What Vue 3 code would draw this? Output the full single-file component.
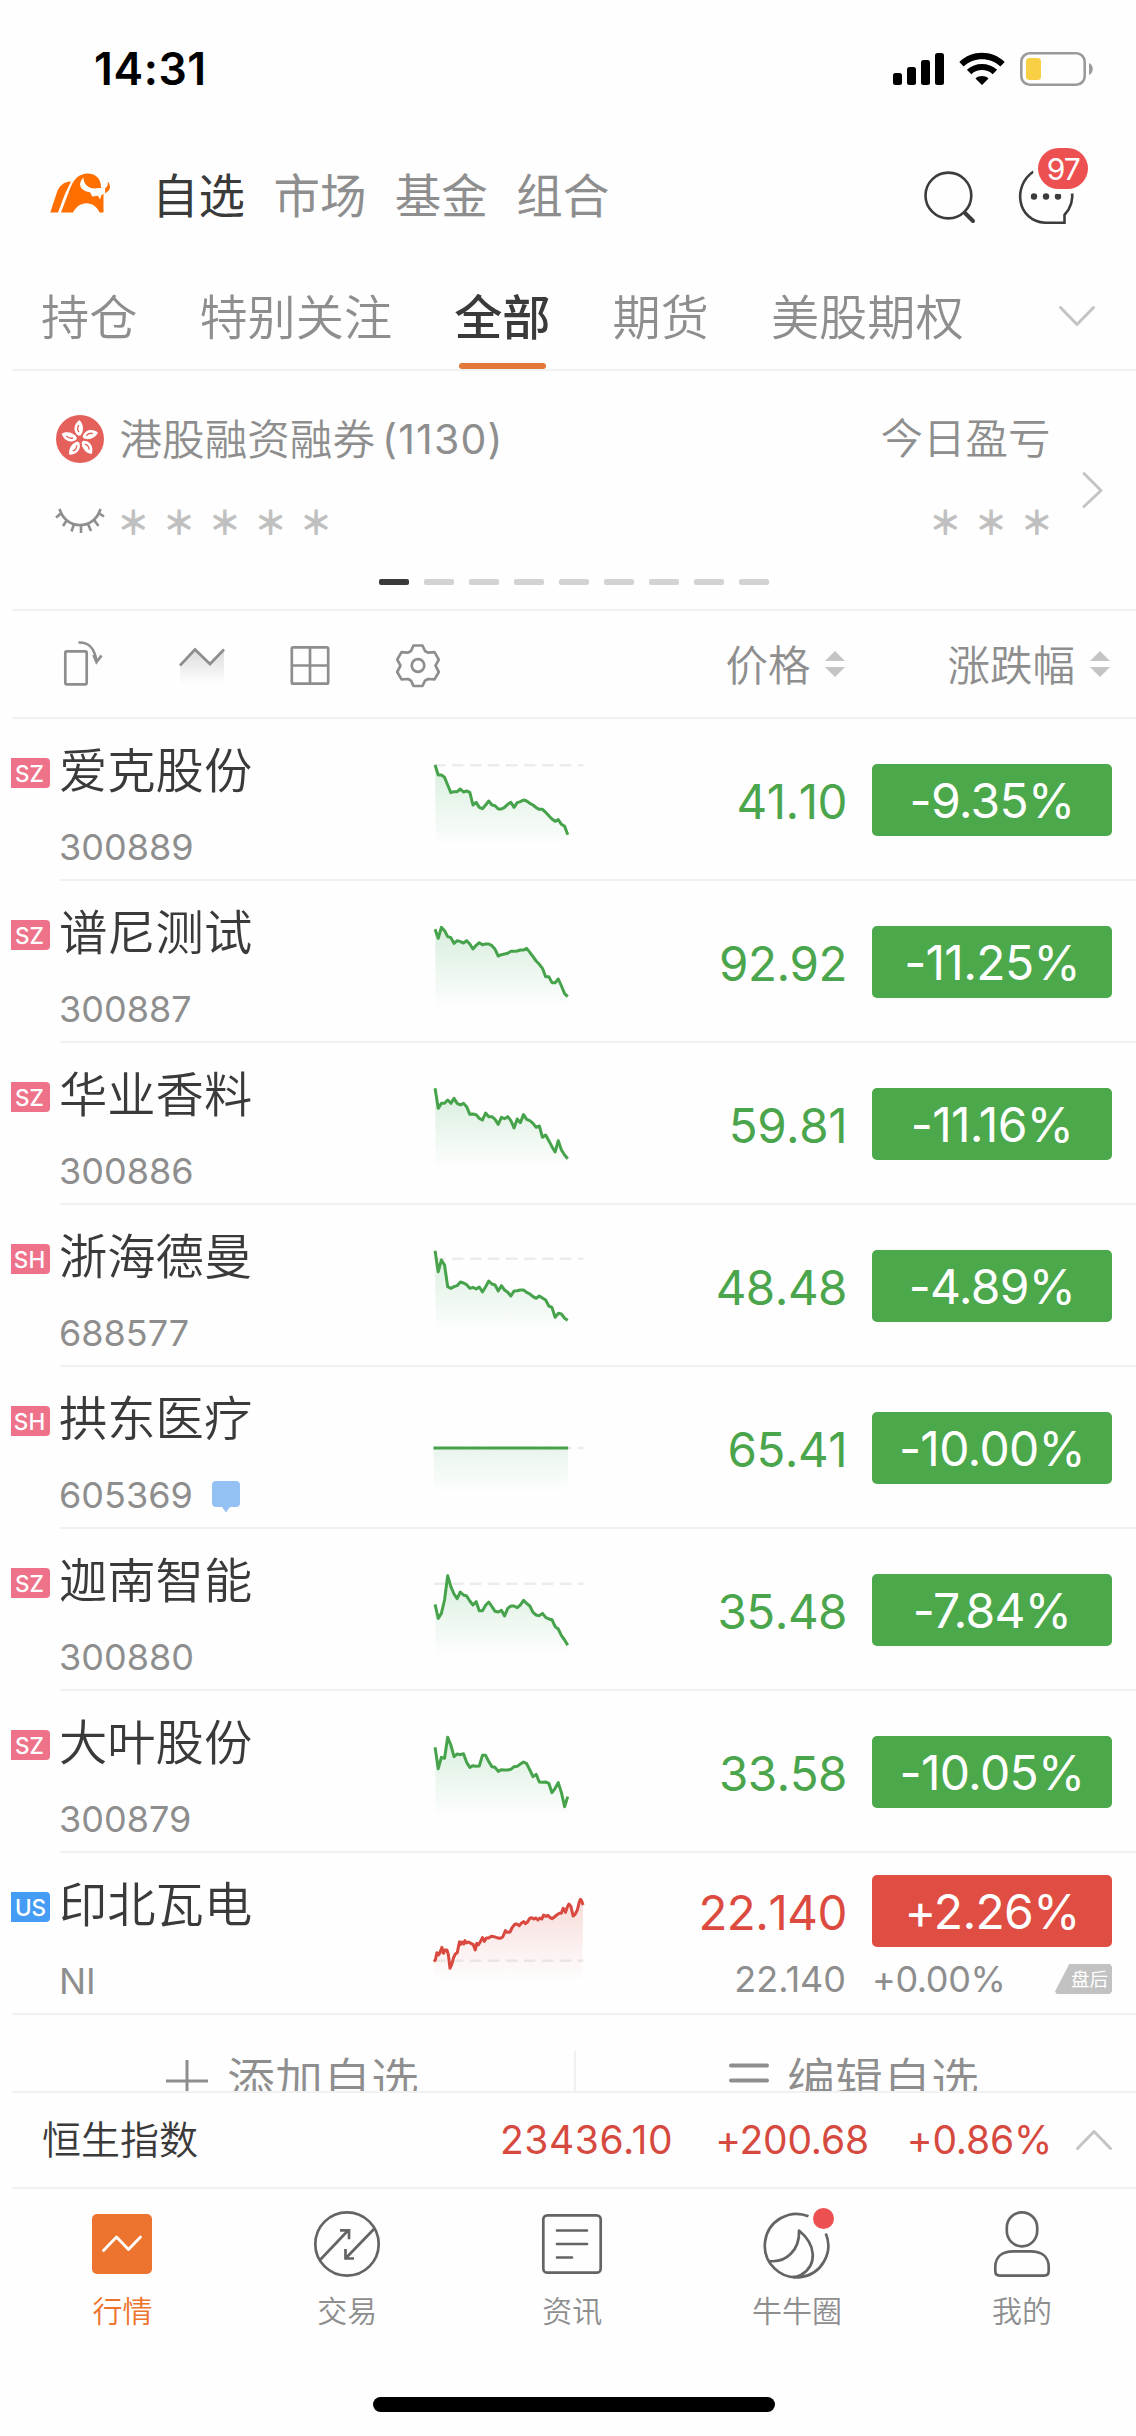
<script setup>
const STEP = 8.26

const series = (values) => values.map((y, i) => [8 + i * STEP, y])
const toPoints = (pts) => pts.map(([x, y]) => `${x.toFixed(1)},${y}`).join(' ')
const toArea = (pts) =>
  `${pts[0][0] + 2},${380} ${toPoints(pts)} ${(pts[pts.length - 1][0] - 2).toFixed(1)},380`

const topNav = ['自选', '市场', '基金', '组合']
const groups = ['持仓', '特别关注', '全部', '期货', '美股期权']

const stocks = [
  {
    market: 'SZ', name: '爱克股份', code: '300889', price: '41.10', change: '-9.35%', base: 139,
    pts: series([138, 168, 168, 175, 198, 221, 218, 218, 210, 219, 216, 220, 258, 250, 265, 269, 258, 246, 258, 260, 270, 270, 265, 256, 250, 265, 251, 248, 243, 246, 253, 258, 266, 271, 271, 280, 290, 300, 307, 302, 316, 322, 347]),
  },
  {
    market: 'SZ', name: '谱尼测试', code: '300887', price: '92.92', change: '-11.25%',
    pts: series([145, 172, 139, 149, 167, 170, 187, 179, 182, 186, 179, 189, 204, 193, 185, 191, 189, 189, 194, 205, 225, 221, 219, 217, 211, 211, 210, 207, 207, 202, 214, 227, 240, 250, 262, 287, 287, 305, 305, 294, 315, 338, 347]),
  },
  {
    market: 'SZ', name: '华业香料', code: '300886', price: '59.81', change: '-11.16%',
    pts: series([136, 196, 181, 181, 171, 181, 166, 181, 186, 181, 191, 214, 213, 215, 226, 231, 210, 221, 221, 229, 244, 223, 227, 221, 233, 255, 228, 239, 215, 229, 233, 241, 253, 249, 283, 276, 293, 311, 327, 293, 321, 336, 347]),
  },
  {
    market: 'SH', name: '浙海德曼', code: '688577', price: '48.48', change: '-4.89%', base: 161,
    pts: series([137, 200, 165, 180, 245, 250, 245, 242, 231, 234, 239, 250, 247, 252, 246, 261, 245, 228, 237, 240, 258, 242, 255, 262, 273, 258, 257, 255, 255, 262, 267, 275, 280, 273, 279, 285, 303, 307, 337, 325, 327, 340, 346]),
  },
  {
    market: 'SH', name: '拱东医疗', code: '605369', price: '65.41', change: '-10.00%', base: 243, note: true,
    pts: [[4, 243], [356, 243]],
  },
  {
    market: 'SZ', name: '迦南智能', code: '300880', price: '35.48', change: '-7.84%', base: 164,
    pts: series([226, 268, 253, 213, 140, 173, 195, 209, 189, 198, 201, 216, 228, 218, 245, 245, 229, 219, 233, 247, 249, 244, 261, 238, 231, 231, 236, 228, 214, 223, 231, 250, 258, 260, 253, 265, 270, 272, 293, 300, 320, 333, 349]),
  },
  {
    market: 'SZ', name: '大叶股份', code: '300879', price: '33.58', change: '-10.05%',
    pts: series([169, 233, 199, 202, 139, 162, 197, 189, 191, 188, 214, 229, 224, 226, 225, 193, 193, 212, 227, 229, 241, 236, 237, 237, 235, 227, 226, 219, 213, 218, 237, 257, 250, 273, 274, 273, 277, 305, 292, 275, 305, 347, 317]),
  },
  {
    market: 'US', name: '印北瓦电', code: 'NI', price: '22.140', change: '+2.26%', base: 323, up: true,
    after: { price: '22.140', change: '+0.00%' },
    pts: [
      [5, 326], [9, 320], [13, 299], [17, 306], [20, 301], [26, 283], [30, 301], [34, 291], [39, 291], [43, 306], [47, 346],
      [52, 333], [56, 315], [61, 303], [66, 299], [72, 266], [75, 274], [79, 267], [83, 273], [86, 263], [90, 270], [95, 267], [103, 272],
      [108, 275], [113, 291], [117, 271], [121, 276], [126, 267], [132, 254], [137, 265], [142, 255], [148, 255], [155, 250], [162, 251], [170, 254],
      [178, 256], [185, 252], [192, 233], [197, 238], [204, 237], [209, 225], [216, 214], [222, 213], [228, 218], [234, 210], [240, 206],
      [244, 212], [249, 208], [255, 197], [260, 194], [266, 198], [272, 195], [277, 201], [282, 195], [287, 198], [292, 186], [298, 190], [303, 187], [309, 194],
      [314, 197], [320, 192], [326, 186], [333, 181], [338, 181], [343, 166], [349, 178], [354, 161], [358, 153], [363, 160], [369, 189], [374, 184], [380, 171], [385, 147], [388, 139], [391, 143], [395, 156],
    ],
  },
]
</script>

<template>
  <div class="app">
    <div class="status">
      <span class="time">14:31</span>
      <svg class="status-icons" width="204" height="36" viewBox="0 0 204 36">
        <rect x="1" y="22" width="9" height="12" rx="2.5" />
        <rect x="15" y="16" width="9" height="18" rx="2.5" />
        <rect x="29" y="9" width="9" height="25" rx="2.5" />
        <rect x="43" y="2" width="9" height="32" rx="2.5" />
        <path d="M90 34l-6.500-6.600c3.600-3.200 9.400-3.200 13 0zM74.900 18.800c8.400-7.900 21.800-7.900 30.200 0l-4.400 4.500c-6-5.600-15.400-5.600-21.400 0zM67.300 11c12.700-12.200 32.700-12.200 45.400 0l-4.400 4.500c-10.300-9.700-26.300-9.700-36.600 0z" />
        <rect x="129.300" y="2.300" width="63.400" height="31.400" rx="8.500" fill="none" stroke="#9a9a9a" stroke-width="2.600" />
        <rect x="134" y="7" width="15" height="22" rx="3.500" fill="#f8cf45" />
        <path d="M197 12c5 2 5 10 0 12z" fill="#9a9a9a" />
      </svg>
    </div>

    <header class="header">
      <svg class="logo" width="62" height="40" viewBox="0 0 62 40">
        <g fill="#ff6f00">
          <path d="M.3 38.500L6.500 19.500C9 12 13 8 21 7.500L15 20 8 38.500z" />
          <path d="M11 38.500L19.500 16C23 6 28-.5 38.500-.5 47 0 51 6 51 13l2.500 6v19.500h-4C47.500 34 44 30 37 29.300 30 29.500 26 33 23 38.500z" />
          <path d="M57.800 7.500c4 5 2.500 9.500-3.500 12l-1-4.500c3.500-1 5-3.500 4.500-7.500z" />
        </g>
        <path d="M33.500 3.500C27 10 30 17 40 18.300l2.300 4.200 5.700-.8 2 3.800 1.500-4.500 3.500-2 .3-4.500c-3-.7-5.800-.7-8.300-.2C39 15 33.500 11 33.500 3.500z" fill="#fefefe" />
      </svg>
      <nav class="top-nav">
        <span v-for="(t, i) in topNav" :key="t" :class="{ on: i === 0 }">{{ t }}</span>
      </nav>
      <svg class="search" width="56" height="56" viewBox="0 0 56 56" fill="none" stroke="#3c3c3c">
        <circle cx="26.400" cy="27.500" r="22.900" stroke-width="2.600" />
        <path d="M43 45l8 8" stroke-width="4" stroke-linecap="round" />
      </svg>
      <div class="chat">
        <svg width="60" height="60" viewBox="0 0 60 60" fill="none" stroke="#3c3c3c" stroke-width="2.600">
          <path d="M17.500 4.500C-4 19 1 54 29 55.800H48.500V48c6-6.500 9-14 7.500-24.500" />
          <g fill="#3c3c3c" stroke="none">
            <circle cx="18" cy="29.500" r="3.200" />
            <circle cx="30" cy="29.500" r="3.200" />
            <circle cx="42" cy="29.500" r="3.200" />
          </g>
        </svg>
        <span class="count">97</span>
      </div>
    </header>

    <div class="groups">
      <div v-for="g in groups" :key="g" class="group" :class="{ on: g === '全部' }">
        <span>{{ g }}</span>
        <i />
      </div>
      <svg class="chev" width="40" height="24" viewBox="0 0 40 24" fill="none" stroke="#c4c4c4" stroke-width="3" stroke-linecap="round" stroke-linejoin="round">
        <path d="M3.500 3.500L20 20.500 36.500 3.500" />
      </svg>
    </div>

    <section class="account">
      <div class="account-body">
        <div class="acc-left">
          <div class="acc-title">
            <svg width="48" height="48" viewBox="-24 -24 48 48">
              <circle r="24" fill="#e4605b" />
              <g v-for="n in 5" :key="n" :transform="`rotate(${n * 72 - 8})`">
                <path d="M-1-3.500C-6-8-5-15 2-19c4 5 3 12-1 15.500z" fill="#fff" />
                <path d="M0-7c-1.500-2.500-1-5 .8-7" fill="none" stroke="#e4605b" stroke-width="1.300" />
              </g>
            </svg>
            <span>港股融资融券</span><b>(1130)</b>
          </div>
          <div class="masked">
            <svg width="50" height="26" viewBox="0 0 50 26" fill="none" stroke="#8e8e8e" stroke-width="2.600">
              <path d="M4.500 1C11 22.500 39 22.500 45.500 1M6.500 5L1 9.500M12 12l-4 6M19 16l-2.500 7.500M26 17v8M33 16l3 7M39.500 12.500l4 5.500M43.500 5l5.500 3.500" />
            </svg>
            <span v-for="n in 5" :key="n" class="star">＊</span>
          </div>
        </div>
        <div class="acc-right">
          <span class="pl">今日盈亏</span>
          <div class="masked">
            <span v-for="n in 3" :key="n" class="star">＊</span>
          </div>
        </div>
        <svg class="acc-go" width="24" height="40" viewBox="0 0 24 40" fill="none" stroke="#c4c4c4" stroke-width="3" stroke-linecap="round" stroke-linejoin="round">
          <path d="M3 3.500L20 20.500 3 36.500" />
        </svg>
      </div>
      <div class="pager"><i v-for="n in 9" :key="n" :class="{ on: n === 1 }" /></div>
    </section>

    <div class="toolbar">
      <svg class="tools" width="390" height="50" viewBox="0 0 390 50" fill="none" stroke="#8e8e8e" stroke-width="2.700">
        <defs>
          <linearGradient id="tool-fade" x1="0" y1="0" x2="0" y2="1">
            <stop offset="0" stop-color="#dcdcdc" />
            <stop offset="1" stop-color="#dcdcdc" stop-opacity="0" />
          </linearGradient>
        </defs>
        <rect x="5.300" y="16.300" width="21.400" height="33" rx="1.500" />
        <path d="M18.500 7.500c11-.5 16 6 18 18.500M33.500 20l3 7 5-6.500" />
        <path d="M120 30l15-16 15 15 14-14v34h-44z" fill="url(#tool-fade)" stroke="none" />
        <path d="M120 30.500l15-16L150 29l14-14.500" />
        <rect x="231.800" y="12.300" width="36.400" height="36.400" rx="1.500" />
        <path d="M250 12v37M231 30.500h37" />
        <circle cx="358" cy="30.500" r="6.300" />
        <path d="M353.500 10.500h9l2.500 5.500 3 1.700 6.500-.5 4.300 7.500-3.300 6 3.300 6.300-4.300 7.400-6.500-.4-3 1.700-2.500 5.300h-9l-2.500-5.300-3-1.700-6.500.4-4.300-7.400 3.300-6.300-3.300-6 4.300-7.500 6.500.5 3-1.700z" stroke-linejoin="round" />
      </svg>
      <div class="sort price-sort">
        <span>价格</span>
        <svg width="20" height="28" viewBox="0 0 20 28" fill="#c4c4c4"><path d="M0 11L10 1l10 10zM0 17h20L10 27z" /></svg>
      </div>
      <div class="sort">
        <span>涨跌幅</span>
        <svg width="20" height="28" viewBox="0 0 20 28" fill="#c4c4c4"><path d="M0 11L10 1l10 10zM0 17h20L10 27z" /></svg>
      </div>
    </div>

    <main>
      <svg class="defs" width="0" height="0">
        <linearGradient id="fade-down" gradientUnits="userSpaceOnUse" x1="0" y1="140" x2="0" y2="380">
          <stop offset="0" stop-color="#3fae5c" stop-opacity=".2" />
          <stop offset="1" stop-color="#3fae5c" stop-opacity="0" />
        </linearGradient>
        <linearGradient id="fade-up" gradientUnits="userSpaceOnUse" x1="0" y1="140" x2="0" y2="385">
          <stop offset="0" stop-color="#dc5048" stop-opacity=".2" />
          <stop offset="1" stop-color="#dc5048" stop-opacity="0" />
        </linearGradient>
      </svg>
      <div v-for="s in stocks" :key="s.code" class="row" :class="{ up: s.up }">
        <span class="market" :class="{ us: s.market === 'US' }">{{ s.market }}</span>
        <div class="cells">
          <div class="ident">
            <span class="name">{{ s.name }}</span>
            <span class="code">
              {{ s.code }}
              <svg v-if="s.note" width="28" height="32" viewBox="0 0 28 32" fill="#94c1f3">
                <path d="M4 0h20a4 4 0 0 1 4 4v18a4 4 0 0 1-4 4h-6l-4 5.500-4-5.500H4a4 4 0 0 1-4-4V4a4 4 0 0 1 4-4z" />
              </svg>
            </span>
          </div>
          <svg class="chart" width="153" height="160" viewBox="0 0 400 480" preserveAspectRatio="none" fill="none">
            <path v-if="s.base" :d="`M5 ${s.base}H396`" stroke="#ececec" stroke-width="2.500" stroke-dasharray="11.500 6.500" vector-effect="non-scaling-stroke" />
            <polygon :points="toArea(s.pts)" :fill="s.up ? 'url(#fade-up)' : 'url(#fade-down)'" />
            <polyline :points="toPoints(s.pts)" :stroke="s.up ? '#d9493f' : '#46a34b'" stroke-width="3" stroke-linejoin="round" vector-effect="non-scaling-stroke" />
          </svg>
          <div class="quote">
            <span class="price">{{ s.price }}</span>
            <span v-if="s.after" class="after-price">{{ s.after.price }}</span>
          </div>
          <div class="move">
            <span class="change">{{ s.change }}</span>
            <div v-if="s.after" class="after">
              <span>{{ s.after.change }}</span>
              <span class="after-tag">盘后</span>
            </div>
          </div>
        </div>
      </div>
    </main>

    <div class="actions">
      <div class="action add">
        <svg width="44" height="44" viewBox="0 0 44 44" stroke="#8e8e8e" stroke-width="3"><path d="M1 22h42M22 1v42" /></svg>
        <span>添加自选</span>
      </div>
      <div class="action edit">
        <svg width="40" height="44" viewBox="0 0 40 44" stroke="#8e8e8e" stroke-width="4" stroke-linecap="round"><path d="M2 6.500h36M2 21.500h36M2 36.500h36" /></svg>
        <span>编辑自选</span>
      </div>
    </div>

    <div class="index">
      <span class="index-name">恒生指数</span>
      <span class="v1">23436.10</span>
      <span class="v2">+200.68</span>
      <span class="v3">+0.86%</span>
      <svg width="38" height="24" viewBox="0 0 38 24" fill="none" stroke="#c4c4c4" stroke-width="3" stroke-linecap="round" stroke-linejoin="round">
        <path d="M2.500 20.500L19 3.500l16.500 17" />
      </svg>
    </div>

    <footer class="tabbar">
      <div class="tab on">
        <svg width="68" height="68" viewBox="0 0 68 68">
          <rect x="4" y="4" width="60" height="60" rx="5" fill="#ed742e" />
          <path d="M15.500 40.500l13-13.500 12 12.500 12-12.500" fill="none" stroke="#fff" stroke-width="2.800" stroke-linecap="round" stroke-linejoin="round" />
        </svg>
        <span>行情</span>
      </div>
      <div class="tab">
        <svg width="68" height="68" viewBox="0 0 68 68" fill="none" stroke="#646464" stroke-width="2.700">
          <circle cx="34" cy="34" r="31.700" />
          <path d="M7 50l28.500-30M27 20.300h9v9M61 19L33 48M32.500 39v9.500H41" />
        </svg>
        <span>交易</span>
      </div>
      <div class="tab">
        <svg width="68" height="68" viewBox="0 0 68 68" fill="none" stroke="#646464" stroke-width="2.700">
          <rect x="5.300" y="5.300" width="57.400" height="57.400" rx="4" />
          <path d="M19 20.500h30M19 34h30M19 47.500h15" stroke-linecap="round" />
        </svg>
        <span>资讯</span>
      </div>
      <div class="tab">
        <svg width="68" height="68" viewBox="0 0 68 68" fill="none" stroke="#646464" stroke-width="2.700">
          <path d="M45.500 6.300A31.700 31.700 0 1 0 62.800 23.500" />
          <path d="M6.500 51C23 53 37 40 36 20.500c17 14 19 34 2 44.500-3 1.500-6 2.200-8 2.200" stroke-linejoin="round" />
          <circle cx="60.500" cy="8.500" r="10.500" fill="#ec5050" stroke="none" />
        </svg>
        <span>牛牛圈</span>
      </div>
      <div class="tab">
        <svg width="68" height="68" viewBox="0 0 68 68" fill="none" stroke="#646464" stroke-width="2.700">
          <rect x="18.800" y="2.300" width="30.400" height="34" rx="15.200" />
          <path d="M7.300 61V57c0-11 8-15.600 18-15.600h17.400c10 0 18 4.600 18 15.600v4c0 3-1.500 4.600-4.500 4.600H11.800c-3 0-4.500-1.600-4.500-4.600z" />
        </svg>
        <span>我的</span>
      </div>
    </footer>
    <div class="home"><i /></div>
  </div>
</template>

<style>
body {
  margin: 0;
  background: #fefefe;
}
</style>

<style scoped>
.app {
  width: 1136px;
  height: 2436px;
  overflow: hidden;
  background: #fefefe;
  color: #8e8e8e;
  font-family: Inter, "Noto Sans CJK SC", sans-serif;
  font-weight: 350;
}
svg {
  display: block;
  flex: none;
  overflow: visible;
}
span {
  white-space: nowrap;
}
.status {
  height: 138px;
  display: flex;
  align-items: center;
  justify-content: space-between;
  padding: 0 44px 0 94px;
}
.time {
  color: #000;
  font-size: 44.500px;
  font-weight: 600;
  letter-spacing: 0.600px;
}
.status-icons {
  margin-right: -4px;
}
.header {
  height: 114px;
  display: flex;
  align-items: center;
  padding-left: 50px;
}
.logo {
  margin-top: -3px;
}
.top-nav {
  display: flex;
  gap: 28.400px;
  margin: -6px 0 0 40px;
  font-size: 46.500px;
  font-weight: 400;
}
.top-nav .on {
  color: #3a3a3a;
}
.search {
  margin-left: 312.500px;
  margin-top: 2px;
}
.chat {
  position: relative;
  margin-left: 38px;
  margin-top: 3px;
}
.count {
  position: absolute;
  left: 22.500px;
  top: -19px;
  width: 50px;
  height: 41px;
  line-height: 42px;
  border-radius: 21px;
  background: #ec5050;
  box-shadow: 0 0 0 5px #fefefe;
  color: #fff;
  font-size: 30px;
  font-weight: 400;
  letter-spacing: -1px;
  text-align: center;
}
.groups {
  height: 117px;
  display: flex;
  margin-left: 12px;
  padding-left: 29px;
  gap: 62px;
  border-bottom: 2px solid #f1f1f1;
}
.group {
  display: flex;
  flex-direction: column;
  align-items: center;
  padding-top: 34px;
  font-size: 48.200px;
  line-height: 64px;
}
.group.on {
  color: #3a3a3a;
  font-weight: 500;
}
.group i {
  width: 87px;
  height: 6px;
  margin-top: 13px;
  border-radius: 3px;
}
.group.on i {
  background: #e37839;
}
.chev {
  margin: 52px 0 0 31.500px;
}
.account {
  height: 238px;
  margin-left: 12px;
  border-bottom: 2px solid #f1f1f1;
}
.account-body {
  display: flex;
  height: 208px;
}
.acc-left {
  padding: 44px 0 0 44px;
}
.acc-title {
  display: flex;
  align-items: center;
  height: 48px;
  font-size: 42.600px;
}
.acc-title span {
  margin: -5px 0 0 15.500px;
}
.acc-title b {
  margin: -1px 0 0 7px;
  font-size: 41px;
  font-weight: 400;
  letter-spacing: 1.200px;
}
.masked {
  display: flex;
  align-items: center;
  height: 48px;
  margin-top: 36px;
}
.acc-left .masked svg {
  margin: -4px 5.500px 0 -1px;
}
.star {
  width: 45.700px;
  margin-top: -4px;
  text-align: center;
  color: #c0c0c0;
  font-family: "Noto Sans CJK SC", sans-serif;
  font-size: 33px;
  font-weight: 900;
  line-height: 48px;
}
.acc-right {
  display: flex;
  flex-direction: column;
  align-items: flex-end;
  margin-left: auto;
  padding-top: 44px;
}
.pl {
  font-size: 42.500px;
  line-height: 48px;
}
.acc-right .masked {
  margin-right: -9px;
}
.acc-go {
  margin: 99px 31.500px 0 30px;
}
.pager {
  display: flex;
  justify-content: center;
  gap: 15.100px;
}
.pager i {
  width: 30px;
  height: 6px;
  border-radius: 2px;
  background: #d3d3d1;
}
.pager .on {
  background: #3a3a3a;
}
.toolbar {
  display: flex;
  align-items: center;
  height: 106px;
  margin-left: 12px;
  border-bottom: 2px solid #f1f1f1;
}
.tools {
  margin: -8px 0 0 48px;
}
.sort {
  display: flex;
  align-items: center;
  gap: 15px;
  font-size: 42.500px;
}
.sort span {
  margin-top: -4px;
}
.price-sort {
  margin-left: auto;
  margin-right: 102px;
}
.sort:last-child {
  margin-right: 26px;
}
.defs {
  position: absolute;
}
.row {
  height: 162px;
  display: flex;
}
.row.up {
  box-sizing: border-box;
  margin-left: 12px;
  border-bottom: 2px solid #f1f1f1;
}
.market {
  width: 39px;
  height: 30px;
  margin: 39px 10px 0 11px;
  border-radius: 0 4px 4px 0;
  background: #ee738a;
  color: #fff;
  font-size: 22.500px;
  font-weight: 500;
  line-height: 31px;
  text-align: center;
  text-indent: -2px;
}
.market.us {
  margin-left: -1px;
  background: #459cf5;
  text-indent: 0;
}
.cells {
  flex: 1;
  display: flex;
  height: 160px;
  border-bottom: 2px solid #f1f1f1;
}
.up .cells {
  border: 0;
}
.ident {
  display: flex;
  flex-direction: column;
  flex: none;
  width: 372px;
}
.name {
  margin: 20px 0 0 -1px;
  color: #3a3a3a;
  font-size: 48.300px;
  line-height: 64px;
}
.code {
  display: flex;
  align-items: center;
  gap: 19px;
  margin: 24px 0 0 -1px;
  font-size: 36px;
  font-weight: 400;
  line-height: 40px;
}
.code svg {
  margin-top: 3px;
}
.quote {
  flex: 1;
  display: flex;
  flex-direction: column;
  align-items: flex-end;
  justify-content: center;
  padding-top: 2px;
}
.price {
  padding-top: 2px;
  margin: 0 -1px -2px 0;
  color: #4aa54c;
  font-size: 47.500px;
  font-weight: 400;
  font-kerning: none;
  line-height: 72px;
  letter-spacing: -0.500px;
}
.up .price {
  color: #dc4a40;
}
.move {
  display: flex;
  flex-direction: column;
  justify-content: center;
  width: 240px;
  margin: 0 24px 0 26px;
  padding-top: 2px;
}
.change {
  height: 72px;
  border-radius: 5px;
  background: #4ba84b;
  color: #fff;
  font-size: 48px;
  font-weight: 400;
  line-height: 74px;
  letter-spacing: -0.700px;
  text-align: center;
}
.up .change {
  background: #df4d43;
}
.up .quote,
.up .move {
  justify-content: flex-start;
  padding-top: 22px;
}
.after-price,
.after {
  height: 48px;
  margin-top: 8px;
  font-size: 36px;
  font-weight: 400;
  line-height: 48px;
}
.after {
  display: flex;
  align-items: center;
  justify-content: space-between;
  letter-spacing: -0.400px;
}
.after-tag {
  width: 57px;
  height: 30px;
  box-sizing: border-box;
  padding-left: 16px;
  background: #c2c2c2;
  clip-path: polygon(25% 0, 96% 0, 100% 8%, 100% 92%, 96% 100%, 3% 100%, 0 92%);
  color: #fff;
  font-size: 18.500px;
  font-weight: 400;
  letter-spacing: 0;
  line-height: 30px;
}
.actions {
  display: flex;
  height: 76px;
  overflow: hidden;
}
.action {
  display: flex;
  align-items: center;
  flex: none;
  height: 96px;
  margin-top: 36px;
  padding-bottom: 36px;
  box-sizing: border-box;
  font-size: 48px;
}
.action span {
  margin: -8px 0 0 18px;
}
.add {
  width: 576px;
  padding-left: 165px;
  border-right: 2px solid #f1f1f1;
}
.edit {
  padding-left: 153px;
}
.index {
  display: flex;
  align-items: center;
  height: 94px;
  margin-left: 12px;
  padding-left: 30px;
  border-top: 2px solid #f1f1f1;
  border-bottom: 2px solid #f1f1f1;
  color: #d6493f;
  font-size: 39px;
  font-weight: 400;
}
.index-name {
  margin-top: -6px;
  color: #3a3a3a;
  font-weight: 350;
}
.v1 {
  margin-left: auto;
  letter-spacing: 0.600px;
}
.v2 {
  margin-left: 42px;
  letter-spacing: -0.200px;
}
.v3 {
  margin-left: 38px;
  letter-spacing: -0.200px;
}
.v1,
.v2,
.v3 {
  margin-top: -2px;
}
.index svg {
  margin: 0 23px 0 23px;
}
.tabbar {
  display: flex;
  height: 208px;
  padding-left: 10px;
}
.tab {
  display: flex;
  flex-direction: column;
  align-items: center;
  width: 224.900px;
  padding-top: 21px;
  font-size: 30px;
}
.tab span {
  margin-top: 13px;
  line-height: 40px;
}
.tab.on span {
  color: #ed742e;
}
.home {
  display: flex;
  justify-content: center;
  padding-left: 12px;
}
.home i {
  width: 402px;
  height: 15px;
  border-radius: 8px;
  background: #000;
}
</style>
